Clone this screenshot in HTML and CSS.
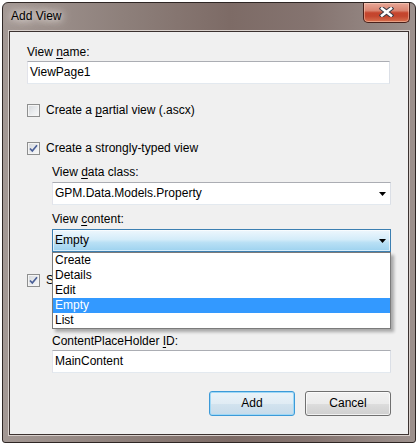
FILE: index.html
```html
<!DOCTYPE html>
<html lang="en">
<head>
    <meta charset="UTF-8">
    <title>Add View</title>
    <link rel="stylesheet" href="styles.css">
</head>
<body>
    <div class="window">
        <!-- Title bar -->
        <div class="titlebar">
            <span class="title">Add View</span>
            <button class="close" type="button" aria-label="Close">
                <svg width="15" height="10" viewBox="0 0 15 10">
                    <path d="M3 1.5 L12 8.5 M12 1.5 L3 8.5" stroke="#3a3a44" stroke-width="4.6" stroke-linecap="square"/>
                    <path d="M3 1.5 L12 8.5 M12 1.5 L3 8.5" stroke="#fff" stroke-width="2.6" stroke-linecap="square"/>
                </svg>
            </button>
        </div>

        <!-- Dialog body -->
        <div class="client">
            <div class="field-label">View <u>n</u>ame:</div>
            <div class="textbox wide">ViewPage1</div>

            <label class="check first">
                <span class="box"></span>
                <span>Create a <u>p</u>artial view (.ascx)</span>
            </label>

            <label class="check second">
                <span class="box">
                    <svg width="11" height="11" viewBox="0 0 11 11"><path d="M2 5.5 L4.3 8 L9 2.3" fill="none" stroke="#4a5f97" stroke-width="1.7"/></svg>
                </span>
                <span>Create a strongly-typed view</span>
            </label>

            <div class="indent">
                <div class="field-label small-gap">View <u>d</u>ata class:</div>
                <div class="combo">
                    <span>GPM.Data.Models.Property</span>
                    <svg class="arrow" width="7" height="4" viewBox="0 0 7 4"><path d="M0 0 H7 L3.5 4 Z" fill="#000"/></svg>
                </div>

                <div class="field-label mid-gap">View <u>c</u>ontent:</div>
                <div class="combo open">
                    <span>Empty</span>
                    <svg class="arrow" width="7" height="4" viewBox="0 0 7 4"><path d="M0 0 H7 L3.5 4 Z" fill="#000"/></svg>
                    <ul class="dropdown">
                        <li>Create</li>
                        <li>Details</li>
                        <li>Edit</li>
                        <li class="selected">Empty</li>
                        <li>List</li>
                    </ul>
                </div>
            </div>

            <label class="check third">
                <span class="box">
                    <svg width="11" height="11" viewBox="0 0 11 11"><path d="M2 5.5 L4.3 8 L9 2.3" fill="none" stroke="#4a5f97" stroke-width="1.7"/></svg>
                </span>
                <span>S</span>
            </label>

            <div class="indent">
                <div class="master-row">
                    <div class="textbox"></div>
                </div>
                <div class="field-label holder-gap">ContentPlaceHolder <u>I</u>D:</div>
                <div class="textbox">MainContent</div>
            </div>

            <div class="buttons">
                <button class="btn default" type="button">Add</button>
                <button class="btn" type="button">Cancel</button>
            </div>
        </div>
    </div>
</body>
</html>
```

FILE: styles.css
```css
* {
    margin: 0;
    padding: 0;
    box-sizing: border-box;
}

body {
    background: #fff;
    font-family: 'Liberation Sans', Arial, sans-serif;
    font-size: 12px;
    line-height: 15px;
    color: #000;
}

u {
    text-decoration-thickness: 1px;
    text-underline-offset: 2px;
}

/* Window frame */
.window {
    margin: 2px 0 0 2px;
    width: 414px;
    height: 441px;
    border: 1px solid #2e2624;
    border-radius: 6px 6px 3px 3px;
    background: linear-gradient(to right, #a39894 0%, #8d7f7a 30%, #7d6b66 55%, #857470 75%, #9d918d 100%);
    padding: 0 6px 7px 6px;
    display: flex;
    flex-direction: column;
}

.titlebar {
    position: relative;
    height: 28px;
    margin: 0 -6px;
    padding: 6px 0 0 8px;
}

.title {
    text-shadow: 0 0 6px #e8e2df, 0 0 10px #e8e2df, 0 0 14px #d8d0cc;
}

.close {
    position: absolute;
    top: 0;
    right: 5px;
    width: 47px;
    height: 20px;
    border: 1px solid #48201a;
    border-top: none;
    border-radius: 0 0 5px 5px;
    background: linear-gradient(to bottom, #e8a898 0%, #d98470 40%, #c5442c 52%, #c4472f 70%, #d8714f 100%);
    box-shadow: inset 0 0 0 1px rgba(255, 220, 200, 0.45);
    display: flex;
    align-items: center;
    justify-content: center;
}

.close svg {
    display: block;
    margin-top: -1px;
}

.client {
    flex: 1;
    background: #f0f0f0;
    border: 1px solid #3c3230;
    box-shadow: 0 0 0 1px #d8d0cc;
    padding: 13px 17px 0 17px;
    position: relative;
}

/* Labels and inputs */
.field-label {
    height: 15px;
}

.textbox {
    height: 23px;
    margin-top: 1px;
    background: #fff;
    border: 1px solid;
    border-color: #abadb3 #dbdfe6 #e3e9ef #e2e3ea;
    padding: 3px 2px 0 2px;
}

.textbox.wide {
    margin-right: 1px;
}

.check {
    display: flex;
    align-items: center;
    height: 15px;
    gap: 6px;
}

.check.first { margin-top: 19px; }
.check.second { margin-top: 23px; }
.check.third { margin-top: 21px; }

.box {
    width: 13px;
    height: 13px;
    border: 1px solid #8e8f8f;
    background: linear-gradient(135deg, #d4d7db 0%, #eceef0 60%, #f8f8f8 100%);
    box-shadow: inset 0 0 0 1px #f4f4f4;
    display: flex;
    align-items: center;
    justify-content: center;
}

.box svg {
    display: block;
}

.indent {
    margin-left: 25px;
}

.small-gap { margin-top: 9px; }
.mid-gap { margin-top: 7px; }
.holder-gap { margin-top: 16px; }

.combo {
    position: relative;
    height: 23px;
    margin-top: 2px;
    background: #fff;
    border: 1px solid;
    border-color: #abadb3 #dbdfe6 #e3e9ef #e2e3ea;
    padding: 3px 2px 0 2px;
}

.combo .arrow {
    position: absolute;
    right: 4px;
    top: 9px;
}

.combo.open {
    border: 1px solid #3c7fb1;
    background: linear-gradient(to bottom, #eef7fd 0%, #d4ecf9 45%, #b9e0f5 60%, #9dd2ef 100%);
    box-shadow: inset 0 0 0 1px rgba(255, 255, 255, 0.6);
}

/* Open list of the View content box */
.dropdown {
    position: absolute;
    z-index: 10;
    left: -1px;
    top: calc(100% + 1px);
    width: calc(100% + 2px);
    list-style: none;
    background: #fff;
    border: 1px solid #7b7b7b;
    box-shadow: 3px 3px 3px rgba(0, 0, 0, 0.3);
}

.dropdown li {
    height: 15px;
    padding-left: 2px;
}

.dropdown li.selected {
    background: #3399ff;
    color: #fff;
}

.master-row {
    display: flex;
    margin-top: 7px;
}

.master-row .textbox {
    flex: 1;
    margin-top: 0;
}

/* Buttons */
.buttons {
    display: flex;
    justify-content: flex-end;
    gap: 10px;
    margin-top: 18px;
}

.btn {
    width: 86px;
    height: 25px;
    font: inherit;
    color: #000;
    border: 1px solid #707070;
    border-radius: 3px;
    background: linear-gradient(to bottom, #f2f2f2 0%, #ebebeb 50%, #dddddd 51%, #cfcfcf 100%);
    box-shadow: inset 0 0 0 1px rgba(255, 255, 255, 0.7);
}

.btn.default {
    border-color: #3c9ad8;
    background: linear-gradient(to bottom, #eaf3f9 0%, #e0ecf4 50%, #d2e3ef 51%, #c7dbea 100%);
    box-shadow: inset 0 0 0 1px #9fd8f6;
}
```
